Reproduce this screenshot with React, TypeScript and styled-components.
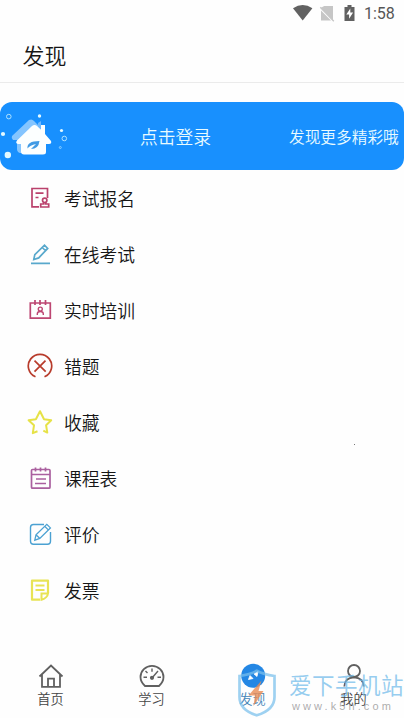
import React from 'react';
import styled, { createGlobalStyle } from 'styled-components';

const GlobalStyle = createGlobalStyle`
  * { box-sizing: border-box; }
  body { margin: 0; background: #fefefe; }
`;

const Screen = styled.div`
  position: relative;
  display: flex;
  flex-direction: column;
  width: 404px;
  height: 718px;
  overflow: hidden;
  background: #fefefe;
  color: #161616;
  font-family: 'Noto Sans CJK SC', sans-serif;
  font-weight: 350;
`;

const StatusBar = styled.div`
  display: flex;
  align-items: center;
  justify-content: flex-end;
  height: 28px;
  padding-right: 9px;
`;

const StatusIcons = styled.svg`
  width: 66px;
  height: 28px;
  margin-right: 5px;
`;

const Clock = styled.span`
  width: 31px;
  font: 400 16px/28px Roboto, sans-serif;
  color: #565656;
  white-space: nowrap;
`;

const Header = styled.header`
  height: 55px;
  padding-left: 22.5px;
  border-bottom: 1px solid #ebebeb;
  font-size: 22px;
  line-height: 52px;
`;

const Banner = styled.section`
  display: flex;
  align-items: center;
  height: 68px;
  margin-top: 19px;
  border-radius: 12px;
  background: #1890fe;
  color: #e9fbff;
  white-space: nowrap;
`;

const BannerArt = styled.svg`
  width: 70px;
  height: 68px;
`;

const LoginText = styled.span`
  width: 149px;
  margin-left: 70px;
  font-size: 17.8px;
`;

const MoreText = styled.span`
  font-size: 15.7px;
`;

const MenuList = styled.ul`
  margin: 0;
  padding: 0 0 0 27px;
  list-style: none;
`;

const MenuItem = styled.li`
  display: flex;
  align-items: center;
  gap: 11px;
  height: 56px;
  font-size: 17.8px;
`;

const MenuIcon = styled.svg<{ $color: string }>`
  width: 26px;
  height: 26px;
  fill: none;
  stroke: ${(p) => p.$color};
  stroke-width: 1.7;
`;

const NavBar = styled.nav`
  display: grid;
  grid-template-columns: repeat(4, 1fr);
  height: 62px;
  margin-top: auto;
`;

const NavItem = styled.div<{ $active?: boolean }>`
  display: flex;
  flex-direction: column;
  align-items: center;
  padding-top: 6px;
  font-size: 13.2px;
  line-height: 20px;
  color: ${(p) => (p.$active ? '#4686b8' : '#454545')};
`;

const NavIcon = styled.svg`
  width: 28px;
  height: 26px;
  fill: none;
  stroke: #606060;
  stroke-width: 1.8;
`;

const NavLabel = styled.span`
  margin-top: 1px;
`;

const Watermark = styled.div`
  position: absolute;
  left: 236px;
  bottom: 0;
  display: flex;
  width: 168px;
  height: 50px;
  pointer-events: none;
`;

const Shield = styled.svg`
  flex: none;
  width: 42px;
  height: 50px;
`;

const Brand = styled.div`
  display: flex;
  flex-direction: column;
  margin-left: 11px;
  white-space: nowrap;
`;

const BrandName = styled.span`
  height: 32px;
  font-size: 22.5px;
  font-weight: 400;
  line-height: 32px;
  letter-spacing: 0.5px;
  color: rgba(112, 186, 234, 0.72);
`;

const BrandUrl = styled.span`
  margin-left: 3px;
  font: 11px/13px 'Liberation Sans', sans-serif;
  letter-spacing: 3.1px;
  color: rgba(145, 145, 145, 0.75);
`;

const Speck = styled.i`
  position: absolute;
  left: 354px;
  top: 444px;
  width: 1px;
  height: 1px;
  background: #777;
`;

const menu = [
  {
    label: '考试报名',
    color: '#ba416c',
    icon: (
      <>
        <path d="M12 21.8H5V3.5H20.5V13M8.5 8.2h8M8.5 12.5h3" />
        <circle cx="17.7" cy="15.3" r="2.2" />
        <path d="M16.7 17v2h-3v3h8v-3h-3v-2" />
      </>
    ),
  },
  {
    label: '在线考试',
    color: '#58a8cc',
    icon: <path d="M4 22.3H23M6.8 18.5l1-4.8L17.5 4.2l3.2 3.2-9 9.5zM15.3 6.5l3 3" />,
  },
  {
    label: '实时培训',
    color: '#bd4672',
    icon: (
      <>
        <path d="M3.3 6h20v15.2h-20zM8 3v5M13 3v5M18.5 3v5" />
        <circle cx="13.3" cy="12.1" r="2" strokeWidth="1.4" />
        <path d="M10.3 18v-1.2q0-2.3 3-2.3t3 2.3V18" strokeWidth="1.4" />
      </>
    ),
  },
  {
    label: '错题',
    color: '#b83c2c',
    icon: <path d="M8.5 23.8A11.7 11.7 0 1 1 17.5 23.8M7.5 7.7l11.2 11M18.5 7.7l-11 11" />,
  },
  {
    label: '收藏',
    color: '#e6e247',
    icon: (
      <path
        d="M10.5 22.3l-4.7 1.8 1.2-7.8-5.4-5 7.3-1.1L13 2.2l4 8 7.2 1.1-5.1 5 1.2 7.3-4-2"
        strokeWidth="2"
        strokeLinejoin="round"
      />
    ),
  },
  {
    label: '课程表',
    color: '#aa609f',
    icon: (
      <>
        <rect x="4.5" y="4.5" width="18.5" height="18.7" rx="1" />
        <path d="M4.5 9.5H23M9 14h10M8 18.5h11" />
        <path d="M8.5 2.5v4M13.5 2.5v4M18.5 2.5v4" />
      </>
    ),
  },
  {
    label: '评价',
    color: '#4ba1d2',
    icon: (
      <>
        <path d="M17 3.5H6.5a3 3 0 0 0-3 3v13.7a3 3 0 0 0 3 3h14a3 3 0 0 0 3-3V11" strokeWidth="1.4" />
        <path d="M7.8 19.2l1.2-5.4L19.8 3.3l3.6 3.6-10.6 10.5zM17.7 5.3l3.6 3.6M9.2 14l3.5 3.3" strokeWidth="1.3" />
      </>
    ),
  },
  {
    label: '发票',
    color: '#e8e354',
    icon: (
      <>
        <path d="M13 22.7H5V3.7h16V16" strokeWidth="2.2" strokeLinejoin="round" />
        <path d="M8.5 8.5h9M8.5 13h9" strokeWidth="1.8" />
        <path d="M14.5 22.7V16.5H21q-.5 4.5-6.5 6.2z" strokeWidth="2" />
      </>
    ),
  },
];

export default function App() {
  return (
    <Screen>
      <GlobalStyle />
      <StatusBar>
        <StatusIcons viewBox="0 0 66 28">
          <path d="M0 8.3Q9.7 1.9 19.4 8.3L9.7 20.5z" fill="#616161" />
          <path d="M31.2 6H40v14.5L27.5 8z" fill="#c6c6c6" />
          <path d="M28 10.5l10 10H28z" fill="#c6c6c6" />
          <path d="M27.3 7.2l13.5 14" stroke="#c6c6c6" strokeWidth="1.3" />
          <path d="M51.5 7h3V5h4v2h3v14h-10z" fill="#616161" />
          <path d="M57.3 8.5l-4 6h2.8v4.3l4-6.3h-2.8z" fill="#fff" />
        </StatusIcons>
        <Clock>1:58</Clock>
      </StatusBar>
      <Header>发现</Header>
      <Banner>
        <BannerArt viewBox="0 0 70 68">
          <path d="M12 34L29 18q3-1.5 5 1l9 9v23H20q-3-1-3-4V38h-4q-2-2-1-4z" fill="#84c5ff" />
          <path d="M38 21l3-2v8h-3z" fill="#70b9fd" />
          <path
            d="M17 38.5L32 24q2.5-1.8 5 0l4 3.8V23h4v9l6 7q1 3-2 3h-3v8q0 2.5-3 2.5H24q-3 0-3-3V42h-3q-3-1-1-3.5z"
            fill="#fcffff"
          />
          <path d="M27.5 46.5q-1-7.5 12-7.5-1 8-8.5 8l5-5q-6 1-8.5 4.5z" fill="#429be4" />
          <g fill="#e5faff">
            <circle cx="3" cy="32" r="2.1" />
            <circle cx="7.8" cy="53" r="3.2" />
            <circle cx="39.5" cy="14" r="1.7" />
            <circle cx="61.5" cy="28.5" r="1.6" />
          </g>
          <g fill="none" stroke="#aee2ff" strokeWidth="1">
            <circle cx="8.8" cy="14.6" r="2.3" />
            <circle cx="64.3" cy="36.5" r="2.3" />
            <circle cx="60.3" cy="45.5" r="1" strokeWidth=".7" />
          </g>
        </BannerArt>
        <LoginText>点击登录</LoginText>
        <MoreText>发现更多精彩哦</MoreText>
      </Banner>
      <MenuList>
        {menu.map((item) => (
          <MenuItem key={item.label}>
            <MenuIcon viewBox="0 0 26 26" $color={item.color}>
              {item.icon}
            </MenuIcon>
            <span>{item.label}</span>
          </MenuItem>
        ))}
      </MenuList>
      <Speck />
      <NavBar>
        <NavItem>
          <NavIcon viewBox="0 0 28 26">
            <path d="M2.5 14.5L14 3.5l11.5 11M5 12.8v12h18v-12M11 24.5v-7.8h6v7.8" />
          </NavIcon>
          <NavLabel>首页</NavLabel>
        </NavItem>
        <NavItem>
          <NavIcon viewBox="0 0 28 26">
            <path d="M7 24q-4.5-4-4.5-9a11.5 11.2 0 0 1 23 0q0 5-4.5 9z" />
            <path
              d="M5.5 15.2H9M19.5 15.2H23M14 6.5v3.2M7.5 9l2 2M14 16l6-7"
              strokeWidth="1.4"
            />
            <circle cx="14" cy="15.8" r="1.2" fill="#606060" />
          </NavIcon>
          <NavLabel>学习</NavLabel>
        </NavItem>
        <NavItem $active>
          <NavIcon viewBox="0 0 28 26">
            <circle cx="14.2" cy="13.8" r="12" fill="#2487e4" stroke="none" />
            <path d="M9.5 17.5l1.5-4 3 3zM15 12l4-2.5-1 5z" fill="#fff" stroke="#fff" strokeWidth=".8" />
          </NavIcon>
          <NavLabel>发现</NavLabel>
        </NavItem>
        <NavItem>
          <NavIcon viewBox="0 0 28 26">
            <circle cx="14" cy="9" r="6" />
            <path d="M4.3 24.5q.2-8.8 9.7-9.2 9.5.4 9.7 9.2" />
          </NavIcon>
          <NavLabel>我的</NavLabel>
        </NavItem>
      </NavBar>
      <Watermark>
        <Shield viewBox="0 0 42 50" fill="none">
          <path
            d="M3.5 8Q14 6.5 20.8 2.8 27.5 6.5 38.5 8v21q0 13-17.7 18.3Q3.5 42 3.5 29z"
            stroke="#78bfec"
            strokeOpacity=".72"
            strokeWidth="2.7"
          />
          <path d="M25.5 12.5L12.5 27.5h6.5L17.5 38l10-15h-5z" fill="#e98c55" fillOpacity=".8" />
        </Shield>
        <Brand>
          <BrandName>爱下手机站</BrandName>
          <BrandUrl>www.k5n.com</BrandUrl>
        </Brand>
      </Watermark>
    </Screen>
  );
}
